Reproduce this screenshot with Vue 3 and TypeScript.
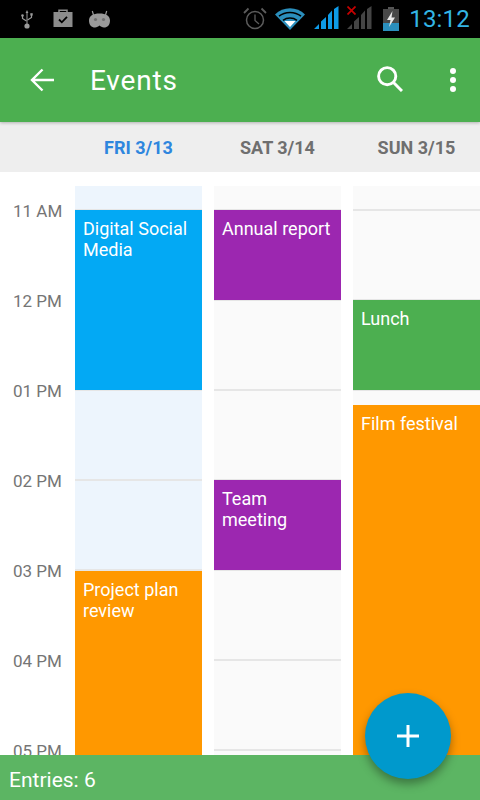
<script setup lang="ts">
interface CalEvent {
  title: string;
  start: number;
  end: number;
  color: string;
}

interface Day {
  label: string;
  today?: boolean;
  events: CalEvent[];
}

const HOUR = 90;
const FIRST_LINE = 24;

const hours = ["11 AM", "12 PM", "01 PM", "02 PM", "03 PM", "04 PM", "05 PM"];

const days: Day[] = [
  {
    label: "FRI 3/13",
    today: true,
    events: [
      { title: "Digital Social Media", start: 0, end: 2, color: "#03a9f4" },
      { title: "Project plan review", start: 4.012, end: 7, color: "#ff9800" },
    ],
  },
  {
    label: "SAT 3/14",
    events: [
      { title: "Annual report", start: 0, end: 1, color: "#9c27b0" },
      { title: "Team meeting", start: 3, end: 4, color: "#9c27b0" },
    ],
  },
  {
    label: "SUN 3/15",
    events: [
      { title: "Lunch", start: 1, end: 2, color: "#4caf50" },
      { title: "Film festival", start: 2.167, end: 7, color: "#ff9800" },
    ],
  },
];

function eventStyle(ev: CalEvent) {
  return {
    top: `${FIRST_LINE + ev.start * HOUR}px`,
    height: `${(ev.end - ev.start) * HOUR}px`,
    background: ev.color,
  };
}

function lineStyle(i: number) {
  return { top: `${FIRST_LINE + i * HOUR - 1}px` };
}
</script>

<template>
  <div class="screen">
    <div class="status-bar">
      <div class="status-left">
        <svg width="12" height="20" viewBox="0 0 12 20" class="usb">
          <path d="M6 1 4.6 4h2.8L6 1ZM5.5 4v12h1V4Z" fill="#9a9a9a" />
          <path d="M1.5 7v2.5L5.5 12M10.5 6v2.5L6.5 11" fill="none" stroke="#9a9a9a" stroke-width="1.2" />
          <circle cx="1.5" cy="6.5" r="1.3" fill="#9a9a9a" />
          <rect x="9.3" y="4.2" width="2.4" height="2.4" fill="#9a9a9a" />
          <circle cx="6" cy="17" r="2.6" fill="#9a9a9a" />
        </svg>
        <svg width="20" height="20" viewBox="0 1 20 20" class="bag">
          <path d="M6 4.5V2.2h8v2.3" fill="none" stroke="#8c8c8c" stroke-width="1.5" />
          <rect x="0.5" y="4" width="19" height="15" fill="#8c8c8c" />
          <path d="M6 11.5 8.8 14.3 14 8.8" fill="none" stroke="#000" stroke-width="1.8" />
        </svg>
        <svg width="23" height="18" viewBox="0 0 23 18" class="droid">
          <path d="M5.5 5 4.3 1M17.5 5l1.2-4" stroke="#9a9a9a" stroke-width="1.2" />
          <path
            d="M1 10.5C1 6 5 3.5 11.5 3.5S22 6 22 10.5C22 15 19.5 17.5 16 17.5 14 17.5 12.7 16.3 11.5 15.5 10.3 16.3 9 17.5 7 17.5 3.5 17.5 1 15 1 10.5Z"
            fill="#9a9a9a"
          />
          <circle cx="7.5" cy="9.5" r="1.6" fill="#707070" />
          <circle cx="15.5" cy="9.5" r="1.6" fill="#707070" />
        </svg>
      </div>
      <div class="status-right">
        <svg width="24" height="24" viewBox="0 0 24 24" class="alarm">
          <circle cx="12" cy="13" r="8.5" fill="none" stroke="#5c5c5c" stroke-width="1.5" />
          <path d="M12 7.5V13.5L16 17" fill="none" stroke="#5c5c5c" stroke-width="1.3" />
          <path d="M1 6 5.5 1.5M23 6 18.5 1.5" stroke="#5c5c5c" stroke-width="1.8" />
        </svg>
        <svg width="30" height="22" viewBox="0 0 30 22" class="wifi">
          <path d="M0 6.5C8-2 22-2 30 6.5L15 22Z" fill="#2b8fbd" />
          <path d="M4 8.2C10 3.2 20 3.2 26 8.2M8 12.3C12 9.2 18 9.2 22 12.3" fill="none" stroke="#000" stroke-width="1.5" />
          <path d="M9.5 13h11L15 19Z" fill="#fff" />
        </svg>
        <svg width="25" height="24" viewBox="0 0 25 24" class="signal">
          <path d="M0 23 5 18V23ZM7 23V15.5L12 11V23ZM14 23V9L18 4.5V23ZM20 23V3L24.5 0V23Z" fill="#0e9be8" />
        </svg>
        <div class="signal-off">
          <svg width="25" height="24" viewBox="0 0 25 24">
            <path d="M0 23 5 18V23ZM7 23V15.5L12 11V23ZM14 23V9L18 4.5V23ZM20 23V3L24.5 0V23Z" fill="#444" />
          </svg>
          <svg width="9" height="9" viewBox="0 0 9 9" class="cross">
            <path d="M.5.5l8 8M8.5.5l-8 8" stroke="#c80000" stroke-width="1.7" />
          </svg>
        </div>
        <svg width="16" height="24" viewBox="0 0 16 24" class="battery">
          <rect x="5" y="0" width="6" height="2" fill="#555" />
          <rect x="0" y="2" width="16" height="22" fill="#484848" />
          <rect x="0" y="16" width="16" height="8" fill="#2b8fbd" />
          <path d="M9.5 4 4 13h3.5L6 20l6-9.5H8.5Z" fill="#e8e8e8" />
        </svg>
        <span class="clock">13:12</span>
      </div>
    </div>

    <header class="app-bar">
      <svg width="24" height="24" viewBox="0 0 24 24" class="back">
        <path d="M24 12H2M12.5 1.5 2 12l10.5 10.5" fill="none" stroke="#fff" stroke-width="2.4" />
      </svg>
      <h1 class="title">Events</h1>
      <svg width="26" height="26" viewBox="0 0 26 26" class="search">
        <circle cx="10.2" cy="10.2" r="8.6" fill="none" stroke="#fff" stroke-width="2.9" />
        <path d="M16.5 16.5 25 25" stroke="#fff" stroke-width="3" />
      </svg>
      <div class="more">
        <i></i>
        <i></i>
        <i></i>
      </div>
    </header>

    <div class="day-header">
      <div
        v-for="day in days"
        :key="day.label"
        class="day-label"
        :class="{ today: day.today }"
      >
        {{ day.label }}
      </div>
    </div>

    <div class="timeline">
      <div class="hours">
        <div v-for="h in hours" :key="h" class="hour">{{ h }}</div>
      </div>
      <div
        v-for="day in days"
        :key="day.label"
        class="day-col"
        :class="{ today: day.today }"
      >
        <div
          v-for="(h, i) in hours"
          :key="h"
          class="hour-line"
          :style="lineStyle(i)"
        ></div>
        <div
          v-for="ev in day.events"
          :key="ev.title"
          class="event"
          :style="eventStyle(ev)"
        >
          {{ ev.title }}
        </div>
      </div>
    </div>

    <footer class="footer">Entries: 6</footer>

    <button class="fab" type="button">
      <svg width="22" height="22" viewBox="0 0 22 22">
        <path d="M11 0v22M0 11h22" stroke="#fff" stroke-width="3" />
      </svg>
    </button>
  </div>
</template>

<style>
html,
body {
  margin: 0;
  overflow: hidden;
}
</style>

<style scoped>
.screen {
  position: relative;
  display: flex;
  flex-direction: column;
  width: 480px;
  height: 800px;
  overflow: hidden;
  background: #fff;
  font-family: Roboto, sans-serif;
}

.status-bar {
  display: flex;
  flex: none;
  align-items: center;
  justify-content: space-between;
  height: 38px;
  padding-right: 10px;
  box-sizing: border-box;
  background: #000;
}

.status-left {
  display: flex;
  align-items: center;
  padding-left: 21px;
}

.usb {
  margin-right: 20px;
}

.bag {
  margin-right: 15px;
}

.status-right {
  display: flex;
  align-items: center;
}

.status-right svg {
  display: block;
}

.alarm {
  margin-right: 8px;
}

.wifi {
  margin-right: 9px;
}

.signal {
  margin-right: 8px;
  margin-bottom: 2px;
}

.signal-off {
  position: relative;
  margin-right: 11px;
  margin-bottom: 2px;
}

.signal-off .cross {
  position: absolute;
  top: 0;
  left: 0;
}

.battery {
  margin-right: 10px;
}

.clock {
  color: #33b5e5;
  font-size: 24px;
  letter-spacing: 0.2px;
  line-height: 28px;
}

.app-bar {
  position: relative;
  z-index: 1;
  display: flex;
  flex: none;
  align-items: center;
  height: 84px;
  padding: 0 24px 0 30px;
  box-sizing: border-box;
  background: #4caf50;
  box-shadow: 0 1px 3px rgba(0, 0, 0, 0.25);
}

.title {
  flex: 1;
  margin: 0 0 0 36px;
  color: #fff;
  font-size: 28px;
  font-weight: 400;
  letter-spacing: 0.8px;
}

.search {
  margin-right: 47px;
  margin-bottom: 2px;
}

.more {
  display: flex;
  flex-direction: column;
  gap: 3px;
}

.more i {
  display: block;
  width: 6px;
  height: 6px;
  border-radius: 50%;
  background: #fff;
}

.day-header {
  display: grid;
  flex: none;
  grid-template-columns: repeat(3, 127px);
  gap: 12px;
  align-items: center;
  height: 50px;
  padding-left: 75px;
  background: #eee;
}

.day-label {
  color: #6f6f6f;
  font-size: 18px;
  font-weight: 700;
  text-align: center;
}

.day-label.today {
  color: #2e86de;
}

.timeline {
  display: grid;
  flex: 1;
  grid-template-columns: 63px repeat(3, 127px);
  column-gap: 12px;
  min-height: 0;
  padding-top: 14px;
  overflow: hidden;
}

.hours {
  padding-top: 13px;
}

.hour {
  height: 90px;
  padding-left: 13px;
  color: #757575;
  font-size: 17px;
  line-height: 24px;
  white-space: nowrap;
}

.day-col {
  position: relative;
  background: #fafafa;
}

.day-col.today {
  background: #edf5fd;
}

.hour-line {
  position: absolute;
  right: 0;
  left: 0;
  height: 2px;
  background: #e6e6e6;
}

.event {
  position: absolute;
  right: 0;
  left: 0;
  padding: 8px;
  box-sizing: border-box;
  color: #fff;
  font-size: 18px;
  line-height: 21px;
}

.footer {
  display: flex;
  flex: none;
  align-items: center;
  height: 45px;
  padding-top: 4px;
  padding-left: 9px;
  box-sizing: border-box;
  background: #5cb563;
  color: #fff;
  font-size: 21px;
}

.fab {
  position: absolute;
  top: 693px;
  left: 365px;
  display: flex;
  align-items: center;
  justify-content: center;
  width: 86px;
  height: 86px;
  padding: 0;
  border: none;
  border-radius: 50%;
  background: #0099cc;
  box-shadow: 0 5px 10px rgba(0, 0, 0, 0.35);
}
</style>
